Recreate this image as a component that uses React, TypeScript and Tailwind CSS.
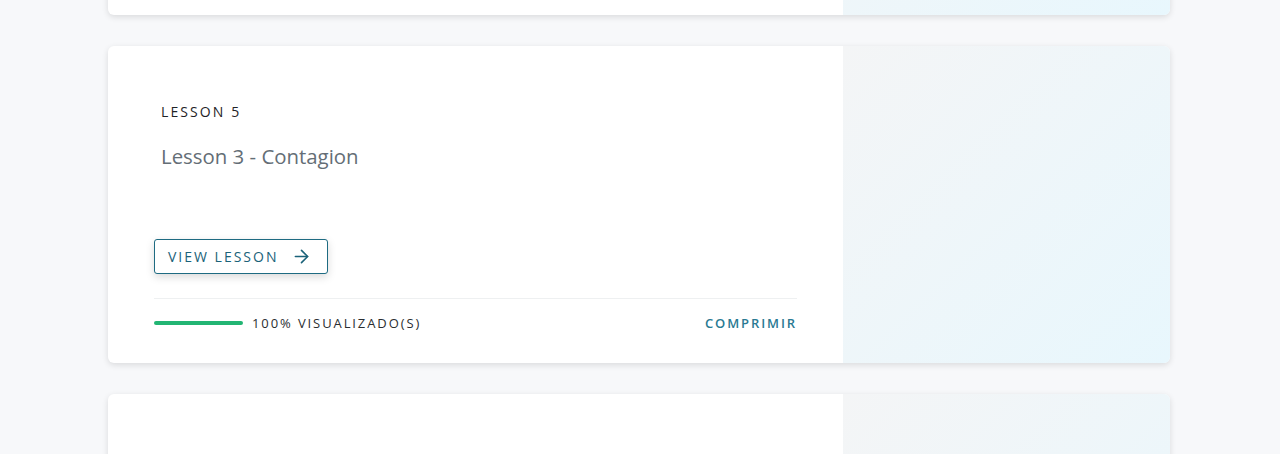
import { ArrowRight } from 'lucide-react';

const font = { fontFamily: '"Open Sans", "Noto Sans", sans-serif' };

const LessonCard: React.FC<{ title?: string; className?: string; empty?: boolean }> = ({ title, className, empty }) => {
    return (
        <div className={`w-[1062px] flex rounded-[6px] bg-white shadow-[0_2px_6px_rgba(0,0,0,0.12)] overflow-hidden ${className ?? ''}`}>
            <div className="w-[735px] px-[46px] pt-[56px] pb-[30px]">
                {!empty && (
                    <>
                        <p className="pl-[7px] text-[14px] leading-[20px] font-medium tracking-[2.1px] text-[#1f2326]">LESSON 5</p>
                        <h2 className="pl-[7px] mt-[20px] text-[20.4px] leading-[28px] font-medium text-[#646e76]">{title}</h2>
                        <button className="mt-[69px] h-[35px] w-[174px] flex items-center gap-[13px] pl-[13px] rounded-[3px] border border-[#1e6b82] bg-white shadow-[0_3px_8px_rgba(0,0,0,0.15)] text-[14px] font-medium tracking-[2px] text-[#1a6279]">
                            VIEW LESSON
                            <ArrowRight size={21} strokeWidth={1.8} />
                        </button>
                        <div className="mt-[24px] border-t border-[#eef0f1]" />
                        <div className="mt-[14px] flex items-center">
                            <div className="w-[89px] h-[4px] rounded-full bg-[#22b573]" />
                            <span className="ml-[9px] text-[13px] leading-[20px] font-medium tracking-[1.9px] text-[#2a2e31]">100% VISUALIZADO(S)</span>
                            <span className="ml-auto text-[13px] leading-[20px] font-semibold tracking-[1.9px] text-[#2a7a93]">COMPRIMIR</span>
                        </div>
                    </>
                )}
            </div>
            <div className="flex-1 bg-gradient-to-br from-[#f4f5f6] to-[#e8f7fd]" />
        </div>
    );
};

export default function App() {
    return (
        <div className="w-[1280px] h-[454px] overflow-hidden bg-[#f7f8fa]" style={font}>
            <div className="flex flex-col items-start pl-[108px] -mt-[302px] gap-[31px]">
                <LessonCard className="h-[317px]" empty />
                <LessonCard title="Lesson 3 - Contagion" className="h-[317px]" />
                <LessonCard className="h-[317px]" empty />
            </div>
        </div>
    );
}
